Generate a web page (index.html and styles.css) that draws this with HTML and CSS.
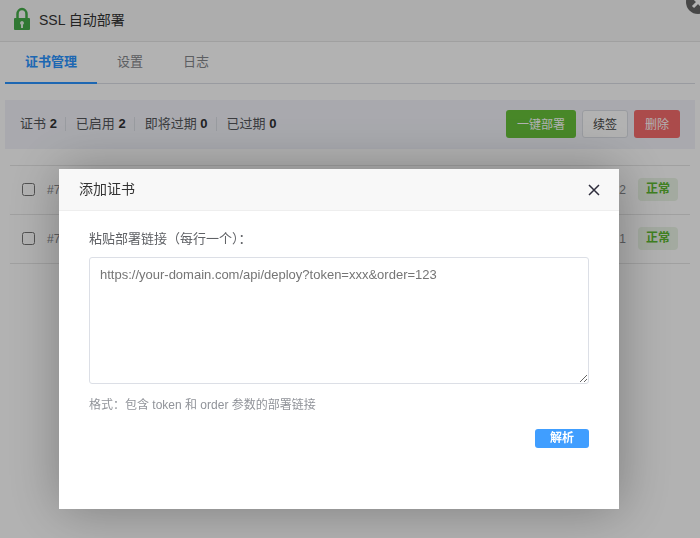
FILE: index.html
```html
<!DOCTYPE html>
<html lang="zh-CN">
<head>
    <meta charset="UTF-8">
    <meta name="viewport" content="width=device-width, initial-scale=1.0">
    <title>SSL 自动部署</title>
    <link rel="stylesheet" href="styles.css">
</head>
<body>
    <header class="page-header">
        <svg class="lock" viewBox="0 0 18 24" width="18" height="24" aria-hidden="true">
            <path d="M4.500 12V7a4.500 5 0 0 1 9 0V12" fill="none" stroke="#45ad4a" stroke-width="2.500"/>
            <rect x="1" y="11" width="16" height="12" rx="1" fill="#45ad4a"/>
            <path d="M9 14a2 2 0 0 1 1 3.700V21H8v-3.300A2 2 0 0 1 9 14z" fill="#e8f5e9"/>
        </svg>
        <h1>SSL 自动部署</h1>
    </header>
    <button class="window-close" aria-label="关闭窗口">
        <svg viewBox="0 0 24 24" width="24" height="24"><path d="M7 7l10 10M17 7L7 17" stroke="#fff" stroke-width="3"/></svg>
    </button>

    <main class="content">
        <nav class="tabs">
            <a class="tab active" href="#certs">证书管理</a>
            <a class="tab" href="#settings">设置</a>
            <a class="tab" href="#logs">日志</a>
        </nav>

        <div class="toolbar">
            <div class="stats">
                <span class="stat">证书 <b>2</b></span>
                <span class="stat">已启用 <b>2</b></span>
                <span class="stat">即将过期 <b>0</b></span>
                <span class="stat">已过期 <b>0</b></span>
            </div>
            <div class="actions">
                <button class="btn btn-success">一键部署</button>
                <button class="btn btn-default">续签</button>
                <button class="btn btn-danger">删除</button>
            </div>
        </div>

        <table class="cert-table">
            <tbody>
                <tr>
                    <td class="col-check"><input type="checkbox" aria-label="选择证书 #7"></td>
                    <td>#7</td>
                    <td class="col-num">2</td>
                    <td class="col-status"><span class="tag">正常</span></td>
                </tr>
                <tr>
                    <td class="col-check"><input type="checkbox" aria-label="选择证书 #7"></td>
                    <td>#7</td>
                    <td class="col-num">1</td>
                    <td class="col-status"><span class="tag">正常</span></td>
                </tr>
            </tbody>
        </table>
    </main>

    <div class="overlay">
        <section class="modal" role="dialog" aria-labelledby="modalTitle">
            <div class="modal-header">
                <h2 id="modalTitle">添加证书</h2>
                <button class="modal-close" aria-label="关闭">
                    <svg viewBox="0 0 12 12" width="12" height="12"><path d="M1 1l10 10M11 1L1 11" stroke="#2e2d3c" stroke-width="1.500"/></svg>
                </button>
            </div>
            <div class="modal-body">
                <label for="links">粘贴部署链接（每行一个）：</label>
                <textarea id="links" placeholder="https://your-domain.com/api/deploy?token=xxx&amp;order=123"></textarea>
                <p class="hint">格式：包含 token 和 order 参数的部署链接</p>
                <div class="modal-footer">
                    <button class="btn-parse">解析</button>
                </div>
            </div>
        </section>
    </div>
</body>
</html>
```

FILE: styles.css
```css
* {
    margin: 0;
    padding: 0;
    box-sizing: border-box;
}

body {
    font-family: "Liberation Sans", "Noto Sans CJK SC", sans-serif;
    font-size: 13px;
    color: #606266;
    background: #fff;
    min-height: 100vh;
    overflow: hidden;
}

button,
textarea {
    font-family: inherit;
}

button {
    cursor: pointer;
    border: none;
}

.page-header {
    display: flex;
    align-items: center;
    gap: 8px;
    height: 42px;
    padding: 0 13px 4px;
    background: #f8f8f8;
    border-bottom: 1px solid #e6e6e6;
}

.page-header h1 {
    font-size: 14px;
    font-weight: normal;
    color: #333;
}

/* sits over the top right corner of the window */
.window-close {
    position: absolute;
    top: -10px;
    right: -10px;
    width: 24px;
    height: 24px;
    border-radius: 50%;
    background: #666;
}

.content {
    padding: 0 5px;
}

.tabs {
    display: flex;
    height: 42px;
    border-bottom: 1px solid #dcdfe6;
    margin-bottom: 16px;
}

.tab {
    height: 42px;
    padding: 0 20px;
    line-height: 40px;
    color: #85878c;
    text-decoration: none;
}

.tab.active {
    color: #2a94ff;
    font-weight: bold;
    border-bottom: 2px solid #2a94ff;
}

.toolbar {
    display: flex;
    justify-content: space-between;
    align-items: center;
    height: 49px;
    padding: 0 15px 2px;
    margin-bottom: 16px;
    background: #f2f3fa;
}

.stats {
    display: flex;
    align-items: center;
}

.stat {
    line-height: 14px;
    color: #55575b;
}

.stat + .stat {
    margin-left: 8px;
    padding-left: 10px;
    border-left: 1px solid #dcdfe6;
}

.stat b {
    color: #303133;
}

.actions {
    display: flex;
    gap: 6px;
}

.btn {
    height: 28px;
    padding: 0 11px;
    font-size: 12px;
    border-radius: 3px;
    color: #fff;
}

.btn-success {
    background: #67c23a;
}

.btn-default {
    padding: 0 10px;
    color: #444;
    background: #fff;
    border: 1px solid #dcdfe6;
}

.btn-danger {
    background: #f56c6c;
}

.cert-table {
    width: calc(100% - 10px);
    margin: 0 5px;
    border-collapse: collapse;
    border-top: 1px solid #e6e6e6;
}

.cert-table td {
    height: 49px;
    padding-bottom: 1px;
    font-size: 12px;
    color: #85878c;
    border-bottom: 1px solid #e6e6e6;
}

.cert-table .col-check {
    width: 37px;
    padding-left: 12px;
}

.col-check input {
    display: block;
    width: 13px;
    height: 13px;
}

.cert-table .col-num {
    text-align: right;
    padding-right: 12px;
}

.cert-table .col-status {
    width: 52px;
}

.tag {
    display: block;
    width: 40px;
    line-height: 23px;
    text-align: center;
    font-weight: bold;
    border-radius: 4px;
    color: #5bb830;
    background: #eaf4e6;
}

.overlay {
    position: fixed;
    inset: 0;
    display: flex;
    justify-content: center;
    align-items: flex-start;
    padding: 169px 22px 0 0;
    background: rgba(0, 0, 0, 0.3);
}

.modal {
    width: 560px;
    max-width: 100%;
    min-height: 340px;
    background: #fff;
    box-shadow: 1px 1px 50px rgba(0, 0, 0, 0.3);
}

.modal-header {
    display: flex;
    justify-content: space-between;
    align-items: center;
    height: 42px;
    padding: 0 19px 3px 20px;
    background: #f8f8f8;
    border-bottom: 1px solid #eee;
}

.modal-header h2 {
    font-size: 14px;
    font-weight: normal;
    color: #333;
}

.modal-close {
    display: flex;
    padding-top: 4px;
    background: none;
}

.modal-body {
    padding: 18px 30px;
}

.modal-body label {
    display: block;
    line-height: 20px;
    margin-bottom: 8px;
}

.modal-body textarea {
    display: block;
    width: 100%;
    height: 127px;
    padding: 8px 10px;
    font-size: 13px;
    line-height: 18px;
    color: #606266;
    border: 1px solid #dcdfe6;
    border-radius: 3px;
    resize: both;
}

.modal-body textarea::placeholder {
    color: #757575;
}

.hint {
    margin-top: 12px;
    font-size: 12px;
    line-height: 18px;
    color: #909399;
}

.modal-footer {
    display: flex;
    justify-content: flex-end;
    margin-top: 15px;
}

.btn-parse {
    width: 54px;
    height: 19px;
    font-size: 12px;
    line-height: 19px;
    font-weight: bold;
    color: #fff;
    background: #409eff;
    border-radius: 3px;
}
```
